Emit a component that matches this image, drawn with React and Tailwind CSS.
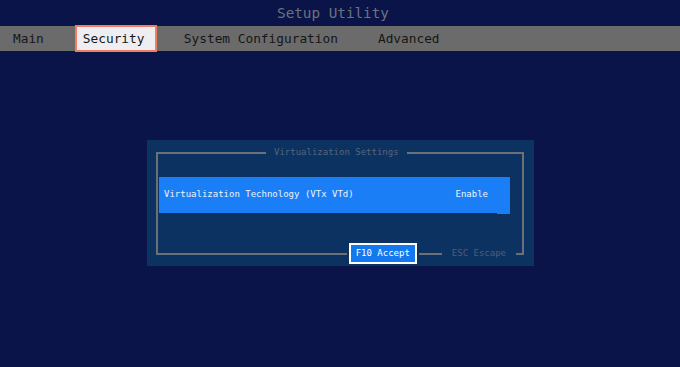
export default function App() {
  const mono = { fontFamily: '"DejaVu Sans Mono", "Liberation Mono", monospace' };

  return (
    <div
      className="h-[367px] w-[680px] bg-[#0b1448] overflow-hidden"
      style={mono}
    >
      {/* title */}
      <div className="h-[26px] flex items-center justify-center pr-[14px] pt-[2px] text-[14.3px] text-[#6c727e]">
        Setup Utility
      </div>

      {/* menu bar */}
      <div className="h-[25px] bg-[#6b6b6b] flex items-center text-[12.8px] text-[#161616]">
        <span className="ml-[13px]">Main</span>
        <span className="ml-[31px] w-[82px] h-[27px] flex items-center pl-[6px] border-2 border-[#f27d60] bg-[#eeeef2]">
          Security
        </span>
        <span className="ml-[27px]">System Configuration</span>
        <span className="ml-[40px]">Advanced</span>
      </div>

      {/* dialog */}
      <div className="mt-[89px] ml-[147px] w-[387px] h-[126px] bg-[#0c3261] pt-[12px] pl-[9px] pr-[10px] pb-[11px] text-[9px]">
        <div className="relative h-full border-2 border-[#6c6f75]">
          <span className="absolute top-[-7px] left-[108px] px-[8px] leading-[11px] bg-[#0c3261] text-[#56657c]">
            Virtualization Settings
          </span>

          <div className="relative mt-[23px] ml-[1px] w-[351px] h-[36px] bg-[#1a7ff6] flex items-center justify-between pl-[5px] pr-[22px] text-[#eef3fb]">
            <span>Virtualization Technology (VTx VTd)</span>
            <span>Enable</span>
            <span className="absolute right-0 bottom-[-1px] w-[13px] h-[1px] bg-[#1a7ff6]" />
          </div>

          <div className="absolute right-[6px] bottom-[-11px] h-[21px] flex items-center">
            <span className="h-full px-[2px] bg-[#0c3261]">
              <span className="h-full flex items-center px-[5px] border-2 border-white bg-[#1479ee] text-white">
                F10 Accept
              </span>
            </span>
            <span className="w-[23px]" />
            <span className="h-full flex items-center px-[10px] bg-[#0c3261] text-[#4f5d74]">
              ESC Escape
            </span>
          </div>
        </div>
      </div>
    </div>
  );
}
